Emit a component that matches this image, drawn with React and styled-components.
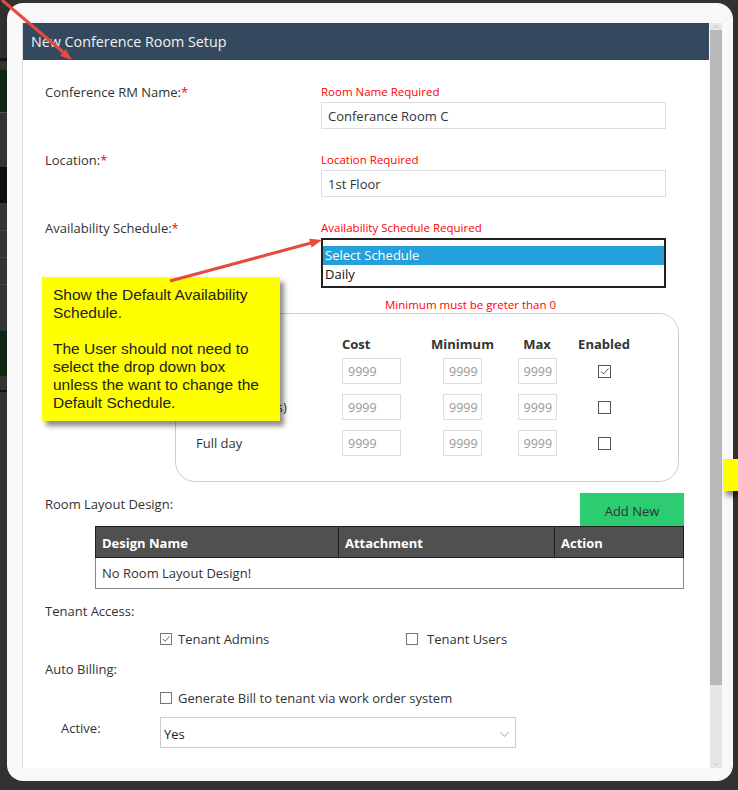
import React from "react";
import styled, { createGlobalStyle } from "styled-components";
import { ChevronDown, ChevronUp } from "lucide-react";

const GlobalStyle = createGlobalStyle`
  html, body { margin: 0; padding: 0; }
  body {
    background: #323232;
    font-family: "Open Sans", "Noto Sans", sans-serif;
    color: #333;
  }
  * { box-sizing: border-box; }
`;

const backdropStrips = [
  { h: 58, c: "#2f2f2f" },
  { h: 3, c: "#111" },
  { h: 9, c: "#333" },
  { h: 42, c: "#0c2812" },
  { h: 1, c: "#555" },
  { h: 54, c: "#333" },
  { h: 36, c: "#0a0c0e" },
  { h: 27, c: "#333" },
  { h: 1, c: "#444" },
  { h: 26, c: "#333" },
  { h: 1, c: "#444" },
  { h: 26, c: "#333" },
  { h: 1, c: "#444" },
  { h: 46, c: "#333" },
  { h: 1, c: "#1a1a1a" },
  { h: 44, c: "#0c2812" },
  { h: 14, c: "#333" },
  { h: 2, c: "#111" },
];

const pricing = [
  { label: "Hourly", checked: true },
  { label: "Half day (4 hrs)", checked: false },
  { label: "Full day", checked: false },
];

const App = () => {
  return (
    <Screen>
      <GlobalStyle />
      <Backdrop>
        {backdropStrips.map((s, i) => (
          <Strip key={i} $h={s.h} $c={s.c} />
        ))}
      </Backdrop>

      <Modal>
        <Panel>
          <Header>New Conference Room Setup</Header>
          <Body>
            <FieldRow>
              <Label>
                Conference RM Name:<Star>*</Star>
              </Label>
              <Field>
                <ErrorText>Room Name Required</ErrorText>
                <TextInput defaultValue="Conferance Room C" />
              </Field>
            </FieldRow>

            <FieldRow>
              <Label>
                Location:<Star>*</Star>
              </Label>
              <Field>
                <ErrorText>Location Required</ErrorText>
                <TextInput defaultValue="1st Floor" />
              </Field>
            </FieldRow>

            <FieldRow $last>
              <Label>
                Availability Schedule:<Star>*</Star>
              </Label>
              <Field>
                <ErrorText>Availability Schedule Required</ErrorText>
                <ListBox>
                  <ListOption $selected>Select Schedule</ListOption>
                  <ListOption>Daily</ListOption>
                </ListBox>
              </Field>
            </FieldRow>

            <MinNote>Minimum must be greter than 0</MinNote>

            <PriceBox>
              <PriceGrid>
                <span />
                <ColHead>Cost</ColHead>
                <ColHead $center>Minimum</ColHead>
                <ColHead $center>Max</ColHead>
                <ColHead $center>Enabled</ColHead>
              </PriceGrid>
              {pricing.map((p) => (
                <PriceRow key={p.label}>
                  <RowLabel>{p.label}</RowLabel>
                  <Cell>
                    <SmallInput $w={59} defaultValue="9999" />
                  </Cell>
                  <Cell $center>
                    <SmallInput $w={39} defaultValue="9999" />
                  </Cell>
                  <Cell $center>
                    <SmallInput $w={39} defaultValue="9999" />
                  </Cell>
                  <Cell $center>
                    <Check $size={13} $border="#555" checked={p.checked} />
                  </Cell>
                </PriceRow>
              ))}
            </PriceBox>

            <LayoutHead>
              <SectionLabel $top={3}>Room Layout Design:</SectionLabel>
              <AddButton>Add New</AddButton>
            </LayoutHead>
            <DesignTable>
              <thead>
                <tr>
                  <Th style={{ width: 243 }}>Design Name</Th>
                  <Th style={{ width: 216 }}>Attachment</Th>
                  <Th>Action</Th>
                </tr>
              </thead>
              <tbody>
                <tr>
                  <Td colSpan={3}>No Room Layout Design!</Td>
                </tr>
              </tbody>
            </DesignTable>

            <SectionLabel $top={14}>Tenant Access:</SectionLabel>
            <OptionRow $top={12}>
              <CheckItem $width={246}>
                <Check $size={12} $border="#777" checked />
                Tenant Admins
              </CheckItem>
              <CheckItem $gap={9}>
                <Check $size={12} $border="#777" />
                Tenant Users
              </CheckItem>
            </OptionRow>

            <SectionLabel $top={14}>Auto Billing:</SectionLabel>
            <OptionRow $top={13}>
              <CheckItem>
                <Check $size={12} $border="#777" />
                Generate Bill to tenant via work order system
              </CheckItem>
            </OptionRow>

            <ActiveRow>
              <ActiveLabel>Active:</ActiveLabel>
              <SelectBox>
                <span>Yes</span>
                <ChevronDown size={15} strokeWidth={1} color="#666" />
              </SelectBox>
            </ActiveRow>
          </Body>
        </Panel>

        <Scrollbar>
          <ScrollArrow>
            <ChevronUp size={9} strokeWidth={1.5} color="#999" />
          </ScrollArrow>
          <Thumb />
          <Track />
          <ScrollArrow>
            <ChevronDown size={9} strokeWidth={1.5} color="#aaa" />
          </ScrollArrow>
        </Scrollbar>
      </Modal>

      <Note>
        <p>
          Show the Default Availability
          <br />
          Schedule.
        </p>
        <p>
          The User should not need to
          <br />
          select the drop down box
          <br />
          unless the want to change the
          <br />
          Default Schedule.
        </p>
      </Note>
      <EdgeNote />

      <Arrows width="738" height="790" viewBox="0 0 738 790">
        <line x1="2" y1="0" x2="63" y2="52" stroke="#e8493d" strokeWidth="3" />
        <polygon points="72,60 59.9,55.8 65.6,48.9" fill="#e8493d" />
        <line x1="170" y1="281" x2="311" y2="243" stroke="#e8493d" strokeWidth="3" />
        <polygon points="322,240 311.6,247.5 309.2,238.8" fill="#e8493d" />
      </Arrows>
    </Screen>
  );
};

export default App;

const Screen = styled.div`
  position: relative;
  width: 738px;
  height: 790px;
  overflow: hidden;
  background: #323232;
`;

const Backdrop = styled.div`
  display: flex;
  flex-direction: column;
  width: 10px;
`;

const Strip = styled.div`
  height: ${(p) => p.$h}px;
  background: ${(p) => p.$c};
`;

const Modal = styled.div`
  position: absolute;
  left: 7px;
  top: 3px;
  width: 726px;
  height: 778px;
  background: #f8f8f8;
  border-radius: 16px;
  padding: 20px 11px 13px 15px;
  display: flex;
  gap: 1px;
`;

const Panel = styled.div`
  flex: 1;
  background: #fff;
  border-left: 1px solid #dcdcdc;
  display: flex;
  flex-direction: column;
  overflow: hidden;
`;

const Header = styled.div`
  height: 37px;
  line-height: 37px;
  background: #34495e;
  color: #f2f2f2;
  font-size: 14.3px;
  padding-left: 8px;
`;

const Body = styled.div`
  padding: 24px 25px 0 22px;
`;

const FieldRow = styled.div`
  display: grid;
  grid-template-columns: 276px 345px;
  margin-bottom: ${(p) => (p.$last ? 9 : 23)}px;
`;

const Label = styled.div`
  font-size: 13px;
  line-height: 16px;
  color: #333;
`;

const Star = styled.span`
  color: #f00;
`;

const Field = styled.div`
  display: flex;
  flex-direction: column;
  gap: 2px;
`;

const ErrorText = styled.div`
  color: #f00;
  font-size: 11.5px;
  line-height: 16px;
`;

const TextInput = styled.input`
  height: 27px;
  border: 1px solid #ddd;
  padding: 0 6px;
  font-family: inherit;
  font-size: 13px;
  color: #333;
  outline: none;
`;

const ListBox = styled.div`
  height: 50px;
  border: 2px solid #222;
  padding-top: 6px;
`;

const ListOption = styled.div`
  height: 19px;
  line-height: 19px;
  padding-left: 2px;
  font-size: 13px;
  background: ${(p) => (p.$selected ? "#26a0da" : "transparent")};
  color: ${(p) => (p.$selected ? "#fff" : "#111")};
`;

const MinNote = styled.div`
  margin-left: 340px;
  color: #f00;
  font-size: 11.5px;
  line-height: 16px;
`;

const PriceBox = styled.div`
  margin-left: 130px;
  width: 504px;
  height: 169px;
  border: 1px solid #ccc;
  border-radius: 20px;
  padding: 21px 0 0 20px;
`;

const PriceGrid = styled.div`
  display: grid;
  grid-template-columns: 146px 82px 77px 72px 62px;
  align-items: center;
`;

const PriceRow = styled(PriceGrid)`
  height: 26px;
  margin-top: 10px;
  &:nth-of-type(2) {
    margin-top: 5px;
  }
`;

const ColHead = styled.div`
  height: 18px;
  line-height: 18px;
  font-size: 13px;
  font-weight: 700;
  color: #333;
  text-align: ${(p) => (p.$center ? "center" : "left")};
`;

const RowLabel = styled.div`
  font-size: 13px;
  color: #333;
`;

const Cell = styled.div`
  display: flex;
  justify-content: ${(p) => (p.$center ? "center" : "flex-start")};
  align-items: center;
`;

const SmallInput = styled.input`
  width: ${(p) => p.$w}px;
  height: 26px;
  border: 1px solid #ddd;
  padding: 0 0 0 5px;
  font-family: inherit;
  font-size: 12.5px;
  color: #999;
  outline: none;
`;

const CheckBoxEl = styled.span`
  display: inline-flex;
  align-items: center;
  justify-content: center;
  flex: none;
  width: ${(p) => p.$size}px;
  height: ${(p) => p.$size}px;
  border: 1px solid ${(p) => p.$border};
  background: #fff;
`;

const Check = ({ checked, $size, $border }) => (
  <CheckBoxEl $size={$size} $border={$border}>
    {checked && (
      <svg width={$size - 2} height={$size - 2} viewBox="0 0 11 11">
        <polyline points="2,5.5 4.5,8 9.5,2.5" fill="none" stroke="#555" strokeWidth="1" />
      </svg>
    )}
  </CheckBoxEl>
);

const LayoutHead = styled.div`
  display: flex;
  justify-content: space-between;
  align-items: flex-start;
  margin-top: 11px;
`;

const SectionLabel = styled.div`
  margin-top: ${(p) => p.$top}px;
  font-size: 13px;
  line-height: 16px;
  color: #333;
`;

const AddButton = styled.button`
  width: 104px;
  height: 33px;
  border: none;
  background: #2ecc71;
  color: #333;
  font-family: inherit;
  font-size: 13px;
  padding: 2px 0 0;
`;

const DesignTable = styled.table`
  margin-left: 50px;
  width: 589px;
  border-collapse: collapse;
`;

const Th = styled.th`
  height: 31px;
  background: #505050;
  border: 1px solid #1e1e1e;
  color: #fff;
  font-size: 13px;
  font-weight: 700;
  text-align: left;
  padding: 2px 6px 0;
`;

const Td = styled.td`
  height: 31px;
  border: 1px solid #888;
  font-size: 13px;
  color: #333;
  padding: 0 6px;
`;

const OptionRow = styled.div`
  display: flex;
  margin-top: ${(p) => p.$top}px;
  padding-left: 115px;
`;

const CheckItem = styled.label`
  display: flex;
  align-items: center;
  gap: ${(p) => p.$gap || 6}px;
  width: ${(p) => (p.$width ? `${p.$width}px` : "auto")};
  white-space: nowrap;
  font-size: 13px;
  line-height: 16px;
  color: #333;
`;

const ActiveRow = styled.div`
  display: grid;
  grid-template-columns: 115px 356px;
  margin-top: 11px;
`;

const ActiveLabel = styled.div`
  padding: 3px 0 0 16px;
  font-size: 13px;
  line-height: 16px;
  color: #333;
`;

const SelectBox = styled.div`
  height: 31px;
  border: 1px solid #ccc;
  display: flex;
  align-items: center;
  justify-content: space-between;
  padding: 3px 3px 0 3px;
  font-size: 13px;
  color: #222;
`;

const Scrollbar = styled.div`
  width: 12px;
  display: flex;
  flex-direction: column;
  background: #e6e6e6;
`;

const ScrollArrow = styled.div`
  height: 7px;
  display: flex;
  align-items: center;
  justify-content: center;
  background: #e6e6e6;
`;

const Thumb = styled.div`
  height: 655px;
  background: #b8b8b8;
`;

const Track = styled.div`
  flex: 1;
`;

const Note = styled.div`
  position: absolute;
  left: 42px;
  top: 277px;
  width: 238px;
  height: 144px;
  background: #ffff00;
  box-shadow: 4px 5px 5px rgba(0, 0, 0, 0.45);
  padding: 9px 11px;
  font-family: "Liberation Sans", Arial, sans-serif;
  font-size: 15.5px;
  line-height: 18px;
  color: #222;
  p {
    margin: 0 0 18px;
    white-space: nowrap;
  }
`;

const EdgeNote = styled.div`
  position: absolute;
  left: 723px;
  top: 459px;
  width: 30px;
  height: 32px;
  background: #ffff00;
  box-shadow: 3px 5px 5px rgba(0, 0, 0, 0.45);
`;

const Arrows = styled.svg`
  position: absolute;
  left: 0;
  top: 0;
  pointer-events: none;
`;
